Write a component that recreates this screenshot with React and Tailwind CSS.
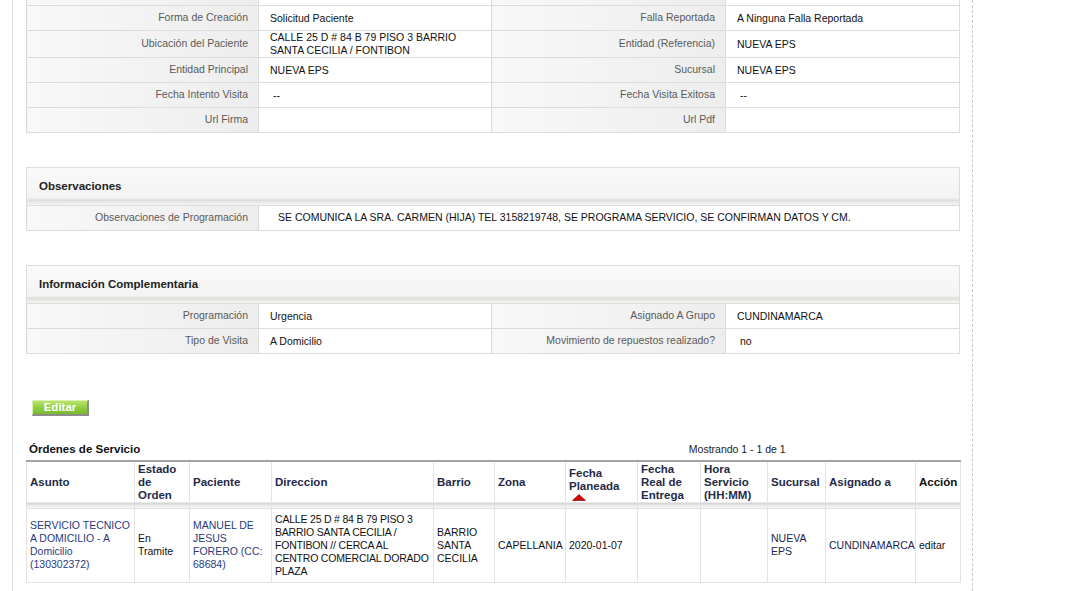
const info = [
  ["", "", "", ""],
  ["Forma de Creación", "Solicitud Paciente", "Falla Reportada", "A Ninguna Falla Reportada"],
  ["Ubicación del Paciente", "CALLE 25 D # 84 B 79 PISO 3 BARRIO SANTA CECILIA / FONTIBON", "Entidad (Referencia)", "NUEVA EPS"],
  ["Entidad Principal", "NUEVA EPS", "Sucursal", "NUEVA EPS"],
  ["Fecha Intento Visita", "\u00a0--", "Fecha Visita Exitosa", "\u00a0--"],
  ["Url Firma", "", "Url Pdf", ""],
];

const complementaria = [
  ["Programación", "Urgencia", "Asignado A Grupo", "CUNDINAMARCA"],
  ["Tipo de Visita", "A Domicilio", "Movimiento de repuestos realizado?", "\u00a0no"],
];

const labelCell =
  "h-[25px] border border-[#dcdcdc] bg-[linear-gradient(to_right,#f8f8f8,#ededed)] pr-[10px] text-right text-[#5a5a5a] font-normal";
const valueCell = "h-[25px] border border-[#dcdcdc] bg-white pl-[11px] text-[#111] leading-[13px]";
const sectionHead =
  "h-[38px] border border-[#dcdcdc] bg-[linear-gradient(to_bottom,#fafafa_0%,#f3f3f3_80%,#dcdcd6_86%,#ececec_92%,#f6f6f6_100%)] pl-[12px] text-left text-[11.5px] font-bold text-[#222]";

function Cols4() {
  return (
    <colgroup>
      <col className="w-[232px]" />
      <col className="w-[233px]" />
      <col className="w-[234px]" />
      <col className="w-[234px]" />
    </colgroup>
  );
}

function InfoRows({ rows }) {
  return rows.map((r, i) => (
    <tr key={i}>
      <td className={labelCell}>{r[0]}</td>
      <td className={valueCell}>{r[1]}</td>
      <td className={labelCell}>{r[2]}</td>
      <td className={valueCell}>{r[3]}</td>
    </tr>
  ));
}

const orderCols = [
  ["Asunto", 108],
  ["Estado de Orden", 55],
  ["Paciente", 82],
  ["Direccion", 162],
  ["Barrio", 61],
  ["Zona", 71],
  ["Fecha Planeada", 72],
  ["Fecha Real de Entrega", 63],
  ["Hora Servicio (HH:MM)", 67],
  ["Sucursal", 58],
  ["Asignado a", 90],
  ["Acción", 45],
];

const th =
  "border-x border-[#e2e2e2] bg-[linear-gradient(to_bottom,#ffffff_0%,#ffffff_86%,#d6d6d6_90%,#ebebeb_95%,#f7f7f7_100%)] px-[3px] pb-[4px] text-left align-middle text-[11.5px] font-bold leading-[13px] text-[#1f2a48]";
const td = "border border-[#e2e2e2] pl-[3px] pr-[1px] align-middle text-[10.5px] leading-[13px]";

export default function App() {
  return (
    <div className="h-[591px] overflow-hidden bg-white font-['Liberation_Sans',Arial,sans-serif] text-[10.5px]">
      <div className="ml-[12px] h-full w-[961px] border-l border-[#dedede]">
        <div className="flow-root h-full border-r border-dashed border-[#c8c8c8] pl-[13px]">
          <table className="-mt-[20px] w-[933px] table-fixed border-collapse">
            <Cols4 />
            <tbody>
              <InfoRows rows={info} />
            </tbody>
          </table>

          <table className="mt-[34px] w-[933px] table-fixed border-collapse">
            <Cols4 />
            <thead>
              <tr>
                <th colSpan={4} className={sectionHead}>Observaciones</th>
              </tr>
            </thead>
            <tbody>
              <tr>
                <td className={labelCell}>Observaciones de Programación</td>
                <td colSpan={3} className="h-[25px] border border-[#dcdcdc] bg-white pl-[19px] text-[#111]">
                  SE COMUNICA LA SRA. CARMEN (HIJA) TEL 3158219748, SE PROGRAMA SERVICIO, SE CONFIRMAN DATOS Y CM.
                </td>
              </tr>
            </tbody>
          </table>

          <table className="mt-[34px] w-[933px] table-fixed border-collapse">
            <Cols4 />
            <thead>
              <tr>
                <th colSpan={4} className={sectionHead}>Información Complementaria</th>
              </tr>
            </thead>
            <tbody>
              <InfoRows rows={complementaria} />
            </tbody>
          </table>

          <div className="mt-[46px] pl-[6px]">
            <button className="flex h-[16px] w-[57px] items-center justify-center border-t border-l border-t-[#d8f0b0] border-l-[#d8f0b0] border-r-2 border-b-2 border-r-[#8c8c8c] border-b-[#8c8c8c] bg-[linear-gradient(to_bottom,#b9e36a,#8fcc40_55%,#79b92c)] text-[11.5px] font-bold leading-none text-white">
              Editar
            </button>
          </div>

          <div className="mt-[26px] grid w-[934px] grid-cols-2 items-center pl-[3px] leading-[14px]">
            <span className="text-[11.5px] font-bold text-[#111]">Órdenes de Servicio</span>
            <span className="pl-[20px] text-center text-[10.5px] text-[#222]">Mostrando 1 - 1 de 1</span>
          </div>

          <table className="mt-[4px] w-[934px] table-fixed border-collapse border-t-2 border-[#a3a3a3]">
            <colgroup>
              {orderCols.map(([name, w]) => (
                <col key={name} style={{ width: w }} />
              ))}
            </colgroup>
            <thead>
              <tr className="h-[47px]">
                <th className={th}>Asunto</th>
                <th className={th}>Estado<br />de<br />Orden</th>
                <th className={th}>Paciente</th>
                <th className={th}>Direccion</th>
                <th className={th}>Barrio</th>
                <th className={th}>Zona</th>
                <th className={th}>
                  <div className="pt-[3px]">Fecha<br />Planeada</div>
                  <svg width="14" height="7" viewBox="0 0 14 7" className="ml-[3px] mt-[1px] block">
                    <polygon points="0.5,6.5 7,0.5 13.5,6.5" fill="#d40000" stroke="#7a0000" strokeWidth="0.6" />
                  </svg>
                </th>
                <th className={th}>Fecha<br />Real de<br />Entrega</th>
                <th className={th}>Hora<br />Servicio<br />(HH:MM)</th>
                <th className={th}>Sucursal</th>
                <th className={th}>Asignado a</th>
                <th className={th + " text-[#111]"}>Acción</th>
              </tr>
            </thead>
            <tbody>
              <tr className="h-[74px]">
                <td className={td + " text-[#2a3a7c]"}>SERVICIO TECNICO A DOMICILIO - A Domicilio (130302372)</td>
                <td className={td + " text-[#111]"}>En Tramite</td>
                <td className={td + " text-[#2a3a7c]"}>MANUEL DE JESUS FORERO (CC: 68684)</td>
                <td className={td + " tracking-[-0.2px] text-[#111]"}>CALLE 25 D # 84 B 79 PISO 3 BARRIO SANTA CECILIA / FONTIBON // CERCA AL CENTRO COMERCIAL DORADO PLAZA</td>
                <td className={td + " text-[#111]"}>BARRIO SANTA CECILIA</td>
                <td className={td + " text-[#111]"}>CAPELLANIA</td>
                <td className={td + " text-[#111]"}>2020-01-07</td>
                <td className={td}></td>
                <td className={td}></td>
                <td className={td + " text-[#1c2450]"}>NUEVA EPS</td>
                <td className={td + " text-[#1c2450]"}>CUNDINAMARCA</td>
                <td className={td + " text-[#111]"}>editar</td>
              </tr>
            </tbody>
          </table>
        </div>
      </div>
    </div>
  );
}
